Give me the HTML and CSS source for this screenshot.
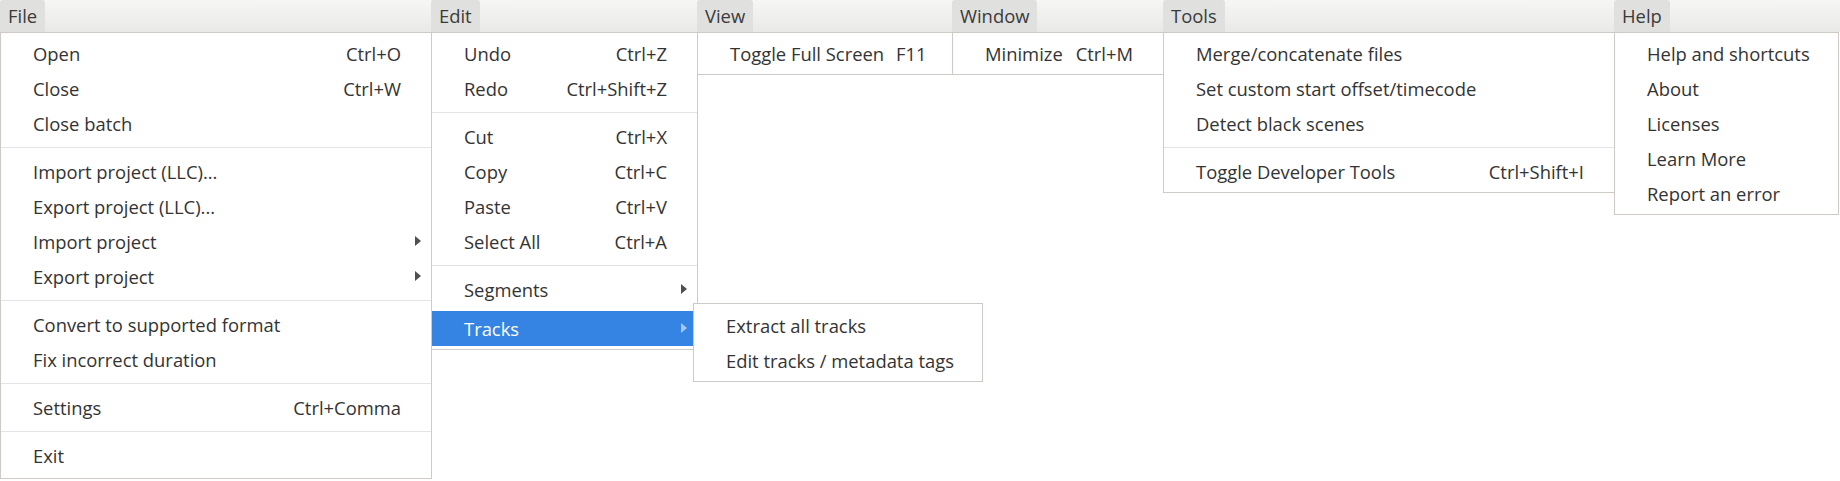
FILE: index.html
```html
<!DOCTYPE html>
<html lang="en">
<head>
<meta charset="utf-8">
<title>Menus</title>
<link rel="stylesheet" href="styles.css">
</head>
<body>
<div class="menus">
  <div class="menu m-file">
    <div class="title">File</div>
    <div class="panel">
      <div class="item"><span class="label">Open</span><span class="accel">Ctrl+O</span></div>
      <div class="item"><span class="label">Close</span><span class="accel">Ctrl+W</span></div>
      <div class="item"><span class="label">Close batch</span></div>
      <div class="sep"></div>
      <div class="item"><span class="label">Import project (LLC)...</span></div>
      <div class="item"><span class="label">Export project (LLC)...</span></div>
      <div class="item"><span class="label">Import project</span><span class="arrow"></span></div>
      <div class="item"><span class="label">Export project</span><span class="arrow"></span></div>
      <div class="sep"></div>
      <div class="item"><span class="label">Convert to supported format</span></div>
      <div class="item"><span class="label">Fix incorrect duration</span></div>
      <div class="sep"></div>
      <div class="item"><span class="label">Settings</span><span class="accel">Ctrl+Comma</span></div>
      <div class="sep"></div>
      <div class="item"><span class="label">Exit</span></div>
    </div>
  </div>

  <div class="menu m-edit">
    <div class="title">Edit</div>
    <div class="panel">
      <div class="item"><span class="label">Undo</span><span class="accel">Ctrl+Z</span></div>
      <div class="item"><span class="label">Redo</span><span class="accel">Ctrl+Shift+Z</span></div>
      <div class="sep"></div>
      <div class="item"><span class="label">Cut</span><span class="accel">Ctrl+X</span></div>
      <div class="item"><span class="label">Copy</span><span class="accel">Ctrl+C</span></div>
      <div class="item"><span class="label">Paste</span><span class="accel">Ctrl+V</span></div>
      <div class="item"><span class="label">Select All</span><span class="accel">Ctrl+A</span></div>
      <div class="sep"></div>
      <div class="item"><span class="label">Segments</span><span class="arrow"></span></div>
      <div class="item active"><span class="label">Tracks</span><span class="arrow"></span>
        <div class="panel submenu">
          <div class="item"><span class="label">Extract all tracks</span></div>
          <div class="item"><span class="label">Edit tracks / metadata tags</span></div>
        </div>
      </div>
    </div>
  </div>

  <div class="menu m-view">
    <div class="title">View</div>
    <div class="panel">
      <div class="item"><span class="label">Toggle Full Screen</span><span class="accel">F11</span></div>
    </div>
  </div>

  <div class="menu m-window">
    <div class="title">Window</div>
    <div class="panel">
      <div class="item"><span class="label">Minimize</span><span class="accel">Ctrl+M</span></div>
    </div>
  </div>

  <div class="menu m-tools">
    <div class="title">Tools</div>
    <div class="panel">
      <div class="item"><span class="label">Merge/concatenate files</span></div>
      <div class="item"><span class="label">Set custom start offset/timecode</span></div>
      <div class="item"><span class="label">Detect black scenes</span></div>
      <div class="sep"></div>
      <div class="item"><span class="label">Toggle Developer Tools</span><span class="accel">Ctrl+Shift+I</span></div>
    </div>
  </div>

  <div class="menu m-help">
    <div class="title">Help</div>
    <div class="panel">
      <div class="item"><span class="label">Help and shortcuts</span></div>
      <div class="item"><span class="label">About</span></div>
      <div class="item"><span class="label">Licenses</span></div>
      <div class="item"><span class="label">Learn More</span></div>
      <div class="item"><span class="label">Report an error</span></div>
    </div>
  </div>
</div>
</body>
</html>
```

FILE: styles.css
```css
html, body {
  margin: 0;
  padding: 0;
  background: #ffffff;
}

body {
  width: 1840px;
  height: 481px;
  overflow: hidden;
  font-family: "Open Sans", "Noto Sans", sans-serif;
  font-size: 18.4px;
  color: #333333;
}

.menus {
  display: flex;
  align-items: flex-start;
  background: linear-gradient(#f6f6f5, #e9e9e8) top left / 100% 32px no-repeat;
}

.menu {
  display: flex;
  flex-direction: column;
  align-items: flex-start;
  flex: none;
  margin-left: -1px;
}

.menu:first-child {
  margin-left: 0;
}

.m-file { width: 432px; }
.m-edit { width: 267px; }
.m-view { width: 256px; }
.m-window { width: 212px; }
.m-tools { width: 452px; }
.m-help { width: 225px; }

.title {
  height: 32px;
  line-height: 31px;
  padding: 0 8px;
  background: #e0e0df;
  border-radius: 3px 3px 0 0;
  color: #3a3a3a;
}

.panel {
  align-self: stretch;
  background: #ffffff;
  border: 1px solid #cfcac6;
  padding: 3px 0;
}

.m-file .panel {
  padding-bottom: 5px;
}

.item {
  display: flex;
  align-items: center;
  height: 35px;
  padding: 0 30px 1px 32px;
  box-sizing: border-box;
  white-space: nowrap;
}

.label {
  flex: 1;
}

.accel {
  margin-left: 12px;
}

.arrow {
  width: 0;
  height: 0;
  margin-left: 12px;
  margin-right: -20px;
  border-left: 6px solid #505050;
  border-top: 5px solid transparent;
  border-bottom: 5px solid transparent;
}

.sep {
  height: 1px;
  margin: 6px 0;
  background: #e4e4e4;
}

.item.active {
  position: relative;
  margin-top: 4px;
  background: #3584e4;
  color: #ffffff;
}

.item.active > .arrow {
  border-left-color: rgba(255, 255, 255, 0.55);
}

.submenu {
  position: absolute;
  left: 261px;
  top: -8px;
  width: 288px;
  padding: 4px 0 3px;
  color: #333333;
}
```
